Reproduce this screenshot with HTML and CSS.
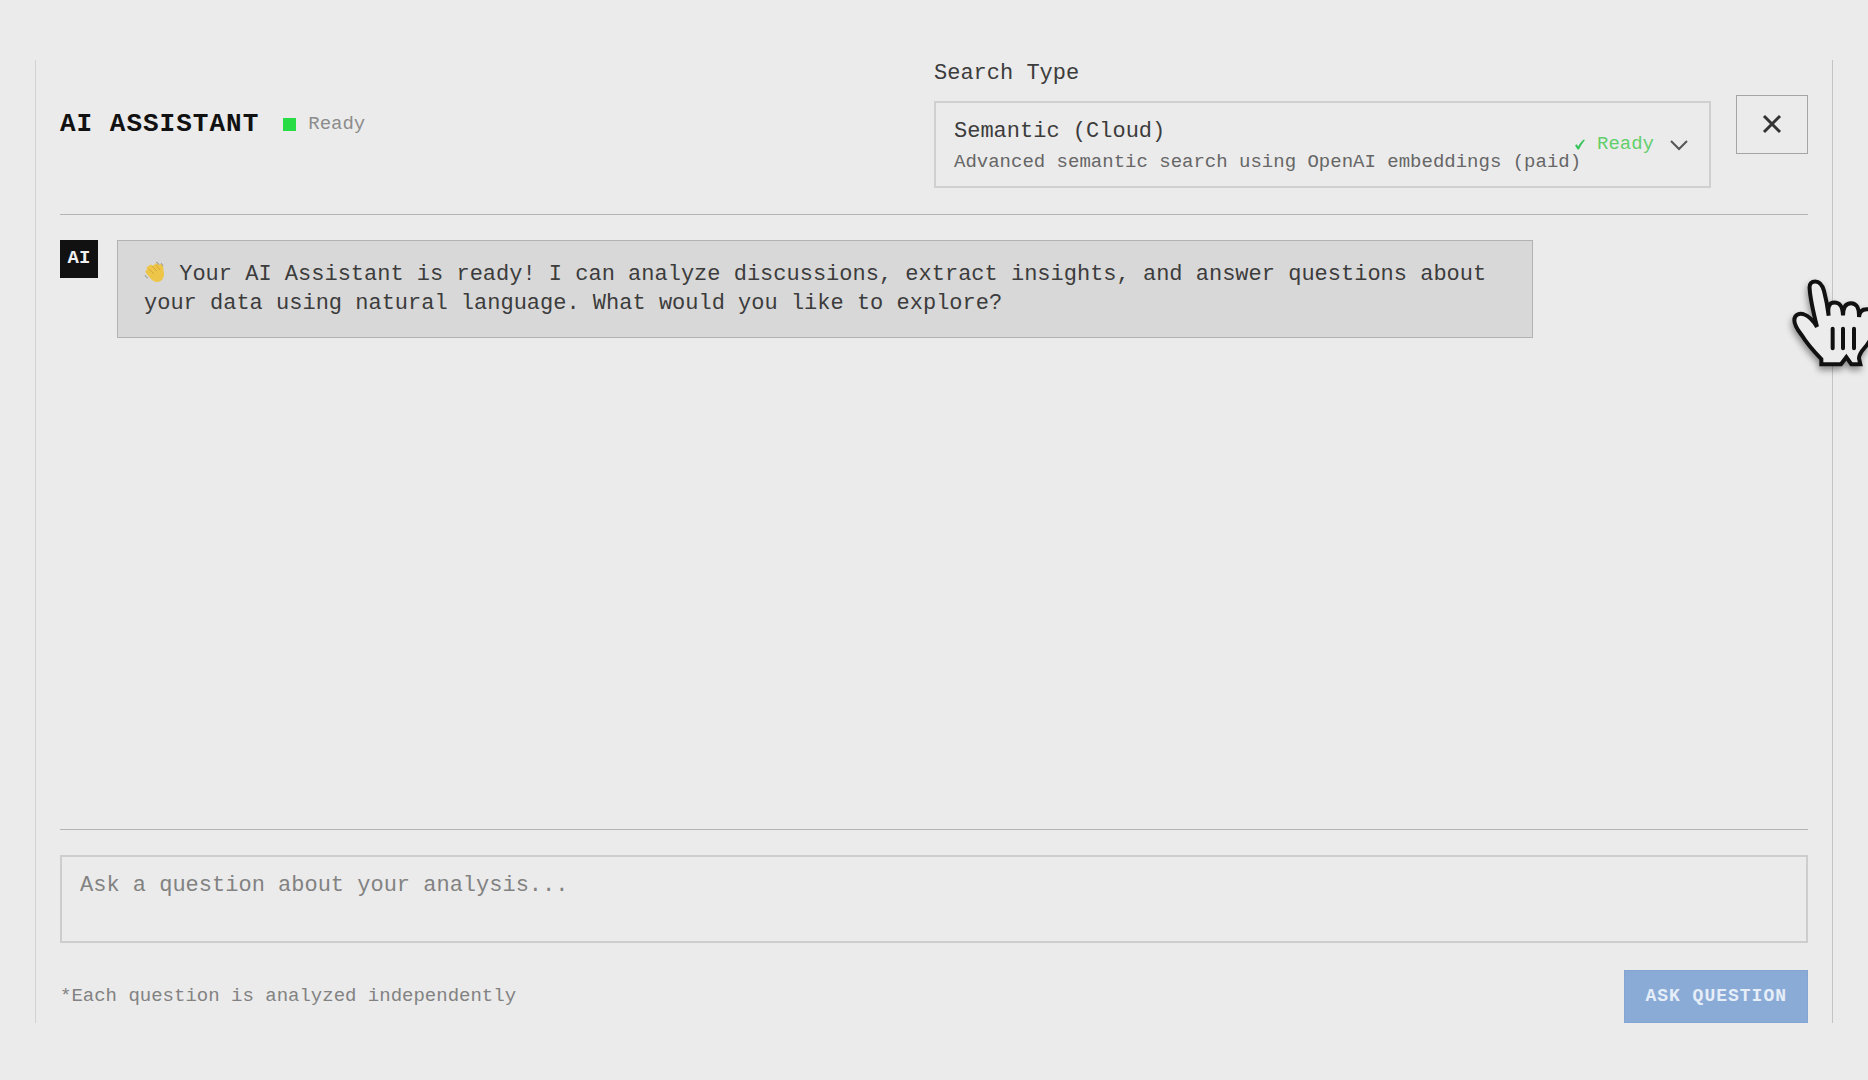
FILE: index.html
```
<!DOCTYPE html>
<html lang="en">
<head>
    <meta charset="UTF-8">
    <title>AI Assistant</title>
    <link rel="stylesheet" href="styles.css">
</head>
<body>
    <main class="assistant">
        <header class="header">
            <div class="heading">
                <h1>AI ASSISTANT</h1>
                <span class="status">Ready</span>
            </div>
            <div class="actions">
                <div class="search-type">
                    <label for="search-type">Search Type</label>
                    <div class="select-box">
                        <select id="search-type" aria-describedby="search-desc">
                            <option>Semantic (Cloud)</option>
                        </select>
                        <span class="select-desc" id="search-desc">Advanced semantic search using OpenAI embeddings (paid)</span>
                        <span class="select-state">
                            <svg class="tick" viewBox="0 0 12 12"><path d="M1 6.400 2.800 5.200l1.400 2.300C5.600 4.600 7.300 2.200 9.800.4l1.200.5C8.600 3.800 6.600 6.900 5 10.600H3.600z"/></svg>
                            Ready
                            <svg class="chevron" viewBox="0 0 20 12"><path d="M2 2l8 8 8-8"/></svg>
                        </span>
                    </div>
                </div>
                <button class="close" type="button" aria-label="Close">
                    <svg viewBox="0 0 20 20"><path d="M2 2l16 16M18 2L2 18"/></svg>
                </button>
            </div>
        </header>

        <section class="messages">
            <div class="avatar">AI</div>
            <p class="bubble"><svg class="wave" viewBox="0 0 22 22">
                <path class="hand" d="M5 5c1-2 3-1 4 0l2-2c1-1 2-1 3 0l1 1c2-2 4-1 4 1l1 8c0 5-3 8-7 8-3 0-5-2-7-4l-4-5c-1-1-1-3 1-3-1-2 0-4 2-4z"/>
                <path class="fold" d="M5 8l5 5M8 5l5 5M12 4l4 5"/>
                <path class="motion" d="M12 1l2 1 1 2M17 2l2 3M1 14l1 2 2 1"/>
            </svg> Your AI Assistant is ready! I can analyze discussions, extract insights, and answer questions about your data using natural language. What would you like to explore?</p>
        </section>

        <form class="composer">
            <textarea aria-label="Question" placeholder="Ask a question about your analysis..."></textarea>
            <div class="composer-foot">
                <span class="note">*Each question is analyzed independently</span>
                <button class="ask" type="button">ASK QUESTION</button>
            </div>
        </form>
    </main>

    <svg class="pointer" viewBox="150 80 234 290" aria-hidden="true">
        <path class="glove" d="M244 341V326C222 303 199 277 186 255C174 239 163 226 163 209C163 193 179 186 193 192C209 198 221 213 231 229C223 197 211 149 209 115C207 99 215 93 226 93C240 93 247 104 252 121C258 143 263 170 266 196C263 173 265 156 283 156C302 156 308 170 309 195C309 171 316 158 333 158C351 158 358 174 357 200C358 185 364 176 380 176C399 176 407 193 405 220C403 255 386 278 372 294C363 304 357 311 357 324L361 341H334L319 320L303 341Z"/>
        <path class="seam" d="M278 235v58M309 235v58M342 235v58"/>
    </svg>
</body>
</html>
```

FILE: styles.css
```
*{
    box-sizing: border-box;
    margin: 0;
    padding: 0;
}
body{
    display: flex;
    position: relative;
    min-height: 100vh;
    padding: 60px 35px 57px;
    overflow: hidden;
    background: #ebebeb;
    color: #3c3c3c;
    font-family: "Courier New", "Liberation Mono", monospace;
    font-size: 22px;
    line-height: 29px;
}
button, select, textarea{
    font: inherit;
    color: inherit;
    border-radius: 0;
}
svg{
    fill: none;
}
.assistant{
    flex: 1;
    display: flex;
    flex-direction: column;
    padding: 0 24px;
    border-left: 1px solid #d2d2d2;
    border-right: 1px solid #c4c4c4;
}

/* header */
.header{
    display: grid;
    grid-template-columns: 1fr 1fr;
    align-items: center;
    padding-bottom: 26px;
    border-bottom: 1px solid #b4b4b4;
}
.heading{
    display: flex;
    align-items: center;
    gap: 24px;
}
h1{
    color: #111;
    font-size: 26px;
    letter-spacing: 1px;
}
.status{
    display: flex;
    align-items: center;
    gap: 12px;
    color: #8c8c8c;
    font-size: 19px;
}
.status:before{
    content: "";
    width: 13px;
    height: 13px;
    background: #28dc46;
}
.actions{
    display: flex;
    align-items: center;
    gap: 25px;
}
.search-type{
    flex: 1;
}
.search-type label{
    display: block;
    margin-bottom: 14px;
    line-height: 27px;
}
.select-box{
    position: relative;
}
.select-box select{
    display: block;
    width: 100%;
    height: 87px;
    padding: 14px 18px 42px;
    border: 2px solid #d0d0d0;
    background: transparent;
    appearance: none;
}
.select-desc, .select-state{
    position: absolute;
    font-size: 19px;
    pointer-events: none;
}
.select-desc{
    left: 20px;
    bottom: 11px;
    color: #666;
}
.select-state{
    display: flex;
    align-items: center;
    gap: 11px;
    top: 0;
    bottom: 0;
    right: 22px;
    color: #62cf6b;
}
.tick{
    width: 12px;
    height: 12px;
    fill: #35c45c;
}
.chevron{
    width: 20px;
    height: 12px;
    margin-left: 4px;
    stroke: #555;
    stroke-width: 2;
}
.close{
    display: grid;
    place-items: center;
    width: 72px;
    height: 59px;
    border: 1px solid #a5a5a5;
    background: transparent;
}
.close svg{
    width: 20px;
    height: 20px;
    stroke: #333;
    stroke-width: 3;
}

/* messages */
.messages{
    flex: 1;
    display: flex;
    align-items: flex-start;
    gap: 19px;
    padding: 25px 0;
}
.avatar{
    width: 38px;
    height: 38px;
    background: #111;
    color: #f0f0f0;
    font-size: 19px;
    font-weight: bold;
    line-height: 36px;
    text-align: center;
}
.bubble{
    width: 81%;
    padding: 19px 26px;
    border: 1px solid #b2b2b2;
    background: #d8d8d8;
}
.wave{
    width: 22px;
    height: 22px;
    vertical-align: -3px;
}
.wave .hand{
    fill: #edc548;
}
.wave .fold{
    stroke: #d9a83a;
}
.wave .motion{
    stroke: #999b93;
}

/* question form */
.composer{
    padding-top: 25px;
    border-top: 1px solid #b4b4b4;
}
.composer textarea{
    display: block;
    width: 100%;
    height: 88px;
    padding: 14px 18px;
    border: 2px solid #cdcdcd;
    background: transparent;
    resize: none;
}
.composer textarea::placeholder{
    color: #828282;
}
.composer-foot{
    display: flex;
    align-items: center;
    justify-content: space-between;
    margin-top: 27px;
}
.note{
    color: #828282;
    font-size: 19px;
}
.ask{
    height: 53px;
    padding: 0 20px;
    border: 1px solid #83a5d3;
    background: #8babd7;
    color: #e6eef8;
    font-size: 18px;
    font-weight: bold;
    letter-spacing: 1px;
}

/* hand pointer over the right edge */
.pointer{
    position: absolute;
    top: 277px;
    right: 0;
    width: 78px;
    height: 97px;
    filter: drop-shadow(-1px 4px 3px rgba(0, 0, 0, .4));
}
.pointer path{
    stroke: #111;
    stroke-width: 12;
    stroke-linecap: round;
}
.pointer .glove{
    fill: #ececec;
}
```
